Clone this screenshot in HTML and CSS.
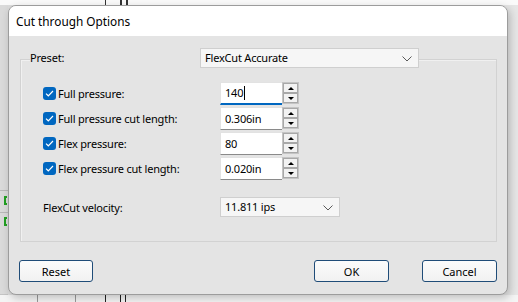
FILE: index.html
```html
<!doctype html>
<html>
<head>
<meta charset="utf-8">
<title>Cut through Options</title>
<link rel="stylesheet" href="styles.css">
</head>
<body>
<div class="desk">
    <div class="app">
        <div class="app-top"><i class="mark m1"></i><i class="mark m2"></i><i class="mark m3"></i></div>
        <div class="app-side">
            <i class="hline h1"></i>
            <i class="tool t1"></i>
            <i class="hline h2"></i>
            <i class="tool t2"></i>
        </div>
        <div class="app-bottom"><i class="vline v1"></i><i class="vline v2"></i><i class="vline v3"></i><i class="vline v4"></i><i class="vline v5"></i></div>
    </div>

    <div class="dialog">
        <div class="titlebar">Cut through Options</div>
        <div class="content">
            <div class="group">
                <div class="preset-row">
                    <span class="legend">Preset:</span>
                    <div class="combo preset">FlexCut Accurate<svg class="chev" width="10" height="6" viewBox="0 0 10 6"><path d="M0.5 0.5 L5 5 L9.5 0.5" fill="none" stroke="#5a5a5a" stroke-width="1"/></svg></div>
                </div>

                <div class="row first">
                    <label class="lbl"><span class="check"><svg width="9" height="7" viewBox="0 0 9 7"><path d="M1 3.6 L3.3 5.8 L8 1" fill="none" stroke="#fff" stroke-width="1.2"/></svg></span>Full pressure:</label>
                    <div class="edit focus">140<span class="caret"></span></div>
                    <div class="spin"><span class="sb"><b class="up"></b></span><span class="sb"><b class="down"></b></span></div>
                </div>
                <div class="row">
                    <label class="lbl"><span class="check"><svg width="9" height="7" viewBox="0 0 9 7"><path d="M1 3.6 L3.3 5.8 L8 1" fill="none" stroke="#fff" stroke-width="1.2"/></svg></span>Full pressure cut length:</label>
                    <div class="edit">0.306in</div>
                    <div class="spin"><span class="sb"><b class="up"></b></span><span class="sb"><b class="down"></b></span></div>
                </div>
                <div class="row">
                    <label class="lbl"><span class="check"><svg width="9" height="7" viewBox="0 0 9 7"><path d="M1 3.6 L3.3 5.8 L8 1" fill="none" stroke="#fff" stroke-width="1.2"/></svg></span>Flex pressure:</label>
                    <div class="edit">80</div>
                    <div class="spin"><span class="sb"><b class="up"></b></span><span class="sb"><b class="down"></b></span></div>
                </div>
                <div class="row">
                    <label class="lbl"><span class="check"><svg width="9" height="7" viewBox="0 0 9 7"><path d="M1 3.6 L3.3 5.8 L8 1" fill="none" stroke="#fff" stroke-width="1.2"/></svg></span>Flex pressure cut length:</label>
                    <div class="edit">0.020in</div>
                    <div class="spin"><span class="sb"><b class="up"></b></span><span class="sb"><b class="down"></b></span></div>
                </div>

                <div class="row velocity">
                    <span class="lbl">FlexCut velocity:</span>
                    <div class="combo speed">11.811 ips<svg class="chev" width="10" height="6" viewBox="0 0 10 6"><path d="M0.5 0.5 L5 5 L9.5 0.5" fill="none" stroke="#5a5a5a" stroke-width="1"/></svg></div>
                </div>
            </div>

            <div class="buttons">
                <button class="btn reset">Reset</button>
                <span class="spacer"></span>
                <button class="btn ok">OK</button>
                <button class="btn cancel">Cancel</button>
            </div>
        </div>
    </div>
</div>
</body>
</html>
```

FILE: styles.css
```css
html, body{
    margin:0;
    padding:0;
}
body{
    width:518px;
    height:302px;
    overflow:hidden;
    font-family:"Noto Sans", "Liberation Sans", Arial, sans-serif;
    font-size:11px;
    letter-spacing:-0.2px;
    color:#000;
}
.desk{
    position:relative;
    width:518px;
    height:302px;
    background:linear-gradient(to right, #dcdcdc 0, #e9e9e9 40%, #e6e6e6 100%);
}

/* app behind the dialog */
.app{
    width:518px;
    height:302px;
    display:flex;
    flex-direction:column;
}
.app-top{
    height:5px;
    background:#fafafa;
    position:relative;
}
.mark{
    position:absolute;
    top:0;
    height:5px;
    background:#333;
    width:1px;
}
.m1{ left:105px; }
.m2{ left:120px; width:2px; }
.m3{ left:126px; width:2px; }
.app-side{
    flex:1;
    width:8px;
    background:#dadada;
    position:relative;
    border-bottom:1px solid #c4c4c4;
}
.hline{
    position:absolute;
    left:0;
    width:8px;
    height:1px;
    background:#b8b8b8;
}
.h1{ top:185px; }
.h2{ top:207px; }
.tool{
    position:absolute;
    left:4px;
    width:3px;
    height:9px;
    border-left:2px solid #22a022;
    border-bottom:2px solid #22a022;
    border-top:2px solid #22a022;
    box-sizing:border-box;
}
.t1{ top:191px; }
.t2{ top:212px; }
.app-bottom{
    height:7px;
    background:#f4f4f4;
    position:relative;
}
.vline{
    position:absolute;
    top:0;
    bottom:0;
    width:1px;
    background:#9a9a9a;
}
.v1{ left:37px; }
.v2{ left:75px; }
.v3{ left:105px; background:#222; }
.v4{ left:120px; background:#222; }
.v5{ left:125px; background:#222; }

/* dialog */
.dialog{
    position:absolute;
    left:8px;
    top:5px;
    width:498px;
    height:288px;
    border:1px solid #9c9c9c;
    border-radius:8px;
    overflow:hidden;
    background:#e4e4e4;
    box-shadow:2px 3px 8px rgba(0,0,0,0.22);
}
.titlebar{
    height:30px;
    line-height:30px;
    padding-left:7px;
    background:#fff;
    font-size:11.8px;
    letter-spacing:0;
}
.content{
    padding:23px 10px 0 11px;
}
.group{
    border:1px solid #d2d2d2;
    box-shadow:inset 1px 1px 0 #f0f0f0;
    height:181px;
}
.preset-row{
    display:flex;
    align-items:center;
    margin-top:-12px;
    height:20px;
}
.legend{
    margin-left:9px;
    width:170px;
    height:20px;
    line-height:19px;
    background:#e4e4e4;
}
.combo{
    position:relative;
    height:18px;
    line-height:18px;
    padding-left:4px;
    border:1px solid #cfcfcf;
    background:#f6f6f6;
}
.preset{
    width:213px;
}
.chev{
    position:absolute;
    right:6px;
    top:7px;
}

.row{
    display:flex;
    align-items:center;
    height:22px;
    margin-top:3px;
    padding-left:22px;
}
.row.first{
    margin-top:14px;
}
.lbl{
    display:flex;
    align-items:center;
    width:177px;
}
.check{
    width:13px;
    height:13px;
    border-radius:3px;
    background:#0067c0;
    margin-right:2px;
    display:flex;
    align-items:center;
    justify-content:center;
}
.edit{
    width:57px;
    height:21px;
    padding-left:4px;
    background:#fff;
    border:1px solid #e2e2e2;
    border-bottom:1px solid #8a8a8a;
    border-right:none;
    display:flex;
    align-items:center;
}
.edit.focus{
    height:20px;
    border-bottom:2px solid #0067c0;
}
.caret{
    width:1px;
    height:14px;
    background:#000;
    margin-left:1px;
}
.spin{
    width:15px;
    height:20px;
    border:1px solid #c4c4c4;
    display:flex;
    flex-direction:column;
    justify-content:space-around;
    align-items:center;
    background:#e6e6e6;
}
.sb{
    width:13px;
    height:8px;
    border:1px solid #a8a8a8;
    background:#f2f2f2;
    display:flex;
    align-items:center;
    justify-content:center;
}
.up, .down{
    width:0;
    height:0;
    border-left:3px solid transparent;
    border-right:3px solid transparent;
}
.up{ border-bottom:3px solid #000; }
.down{ border-top:3px solid #000; }

.velocity{
    margin-top:18px;
    height:20px;
}
.speed{
    width:114px;
}

.buttons{
    display:flex;
    margin-top:18px;
}
.spacer{
    flex:1;
}
.btn{
    height:22px;
    font-family:inherit;
    font-size:11px;
    color:#000;
    background:linear-gradient(#fbfbfb, #f1f1f1);
    border:1px solid #1f4c78;
    border-radius:3px;
    padding:0;
}
.reset{
    width:74px;
    margin-left:-1px;
}
.ok{
    width:75px;
    margin-right:33px;
}
.cancel{
    width:75px;
}
```
